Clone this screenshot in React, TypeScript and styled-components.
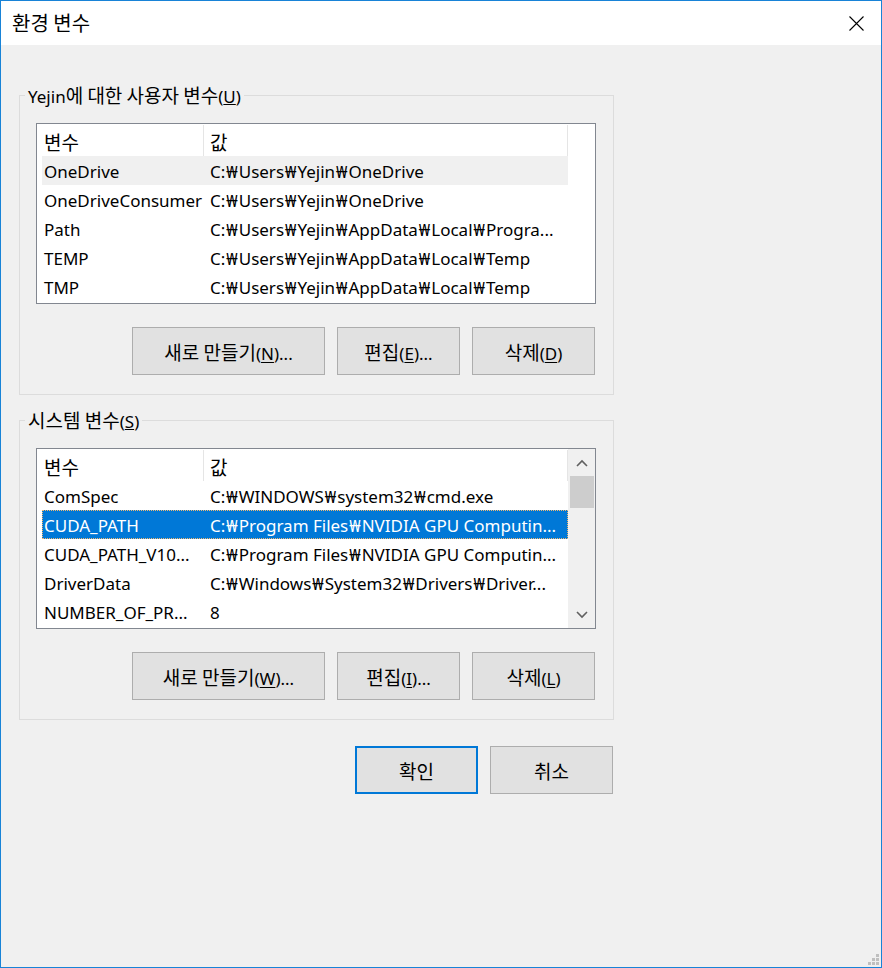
import React from 'react'
import styled, { createGlobalStyle } from 'styled-components'

const colors = {
  frame: '#1883d7',
  face: '#f0f0f0',
  white: '#ffffff',
  text: '#000000',
  groupLine: '#dcdcdc',
  listBorder: '#828790',
  headerLine: '#e5e5e5',
  hover: '#f0f0f0',
  selected: '#0078d7',
  button: '#e1e1e1',
  buttonBorder: '#adadad',
  thumb: '#cdcdcd',
  arrow: '#606060',
  grip: '#bfbfbf',
}

const GlobalStyle = createGlobalStyle`
  html, body {
    margin: 0;
    padding: 0;
    background: ${colors.face};
  }
`

const Window = styled.div`
  position: relative;
  box-sizing: border-box;
  width: 882px;
  height: 968px;
  display: flex;
  flex-direction: column;
  border: 1px solid ${colors.frame};
  background: ${colors.face};
  color: ${colors.text};
  font-family: 'Noto Sans', 'Noto Sans CJK KR', sans-serif;
  font-size: 17px;
`

// Korean runs are drawn a little larger, like Malgun Gothic next to Segoe UI
const Ko = styled.span`
  font-family: 'Noto Sans CJK KR', sans-serif;
  font-size: 19px;
`

const Won = styled.span`
  margin: 0 1px;
`

const TitleBar = styled.header`
  display: flex;
  justify-content: space-between;
  align-items: center;
  flex: none;
  height: 44px;
  padding: 0 17px 0 11px;
  background: ${colors.white};
`

const Title = styled.div`
  font-family: 'Noto Sans CJK KR', sans-serif;
  font-size: 20px;
  line-height: 1;
`

const CloseIcon = styled.svg`
  display: block;
`

const Content = styled.main`
  display: flex;
  flex-direction: column;
  padding: 38px 0 0 18px;
`

const GroupBox = styled.fieldset<{ $gap?: number }>`
  box-sizing: border-box;
  width: 595px;
  min-width: 0;
  margin: 0 0 ${(p) => p.$gap ?? 0}px;
  padding: 16px 17px 19px 16px;
  border: 1px solid ${colors.groupLine};
`

const GroupTitle = styled.legend`
  margin-left: -11px;
  padding: 0 3px;
  line-height: 24px;
  height: 24px;
`

const ListBox = styled.div`
  box-sizing: border-box;
  display: flex;
  width: 560px;
  height: 181px;
  border: 1px solid ${colors.listBorder};
  background: ${colors.white};
  overflow: hidden;
`

const ListBody = styled.div`
  flex: none;
  width: 526px;
  padding-left: 5px;
`

const HeaderRow = styled.div`
  display: flex;
  height: 32px;
`

const HeaderCell = styled.div<{ $width: number; $pad: number }>`
  box-sizing: border-box;
  display: flex;
  align-items: center;
  width: ${(p) => p.$width}px;
  margin-top: 1px;
  padding: 2px 0 0 ${(p) => p.$pad}px;
  border-right: 1px solid ${colors.headerLine};
  white-space: nowrap;
`

const Row = styled.div<{ $state?: 'hover' | 'selected' }>`
  box-sizing: border-box;
  display: flex;
  align-items: center;
  height: 29px;
  padding-top: 2px;
  background: ${(p) =>
    p.$state === 'selected'
      ? colors.selected
      : p.$state === 'hover'
        ? colors.hover
        : 'transparent'};
  color: ${(p) => (p.$state === 'selected' ? colors.white : colors.text)};
  border: 1px dotted
    ${(p) => (p.$state === 'selected' ? '#f2b871' : 'transparent')};
`

const Cell = styled.div<{ $width?: number; $pad: number }>`
  box-sizing: border-box;
  flex: ${(p) => (p.$width ? 'none' : '1')};
  width: ${(p) => (p.$width ? `${p.$width}px` : 'auto')};
  padding-left: ${(p) => p.$pad}px;
  white-space: nowrap;
  overflow: hidden;
`

const ScrollBar = styled.div`
  flex: none;
  display: flex;
  flex-direction: column;
  align-items: center;
  width: 27px;
  margin-left: auto;
  background: ${colors.face};
`

const ScrollArrow = styled.div`
  display: flex;
  justify-content: center;
  align-items: center;
  width: 100%;
  height: 27px;
`

const ScrollThumb = styled.div`
  width: 24px;
  height: 32px;
  background: ${colors.thumb};
`

const ScrollTrack = styled.div`
  flex: 1;
`

const ButtonRow = styled.div<{ $top: number }>`
  display: flex;
  justify-content: flex-end;
  gap: 12px;
  margin-top: ${(p) => p.$top}px;
  padding-right: 1px;
`

const Button = styled.button<{ $width: number; $default?: boolean }>`
  box-sizing: border-box;
  width: ${(p) => p.$width}px;
  height: 48px;
  padding: 0;
  border: ${(p) =>
    p.$default
      ? `2px solid ${colors.selected}`
      : `1px solid ${colors.buttonBorder}`};
  background: ${colors.button};
  color: ${colors.text};
  font-family: inherit;
  font-size: 17px;

  u {
    text-underline-offset: 2px;
  }
`

const Footer = styled.div`
  display: flex;
  justify-content: flex-end;
  gap: 12px;
  width: 594px;
  margin-top: 26px;
`

const Grip = styled.svg`
  position: absolute;
  right: 1px;
  bottom: 1px;
`

type Variable = {
  name: string
  value: string
  state?: 'hover' | 'selected'
}

const userVariables: Variable[] = [
  { name: 'OneDrive', value: 'C:₩Users₩Yejin₩OneDrive', state: 'hover' },
  { name: 'OneDriveConsumer', value: 'C:₩Users₩Yejin₩OneDrive' },
  { name: 'Path', value: 'C:₩Users₩Yejin₩AppData₩Local₩Progra...' },
  { name: 'TEMP', value: 'C:₩Users₩Yejin₩AppData₩Local₩Temp' },
  { name: 'TMP', value: 'C:₩Users₩Yejin₩AppData₩Local₩Temp' },
]

const systemVariables: Variable[] = [
  { name: 'ComSpec', value: 'C:₩WINDOWS₩system32₩cmd.exe' },
  {
    name: 'CUDA_PATH',
    value: 'C:₩Program Files₩NVIDIA GPU Computin...',
    state: 'selected',
  },
  { name: 'CUDA_PATH_V10...', value: 'C:₩Program Files₩NVIDIA GPU Computin...' },
  { name: 'DriverData', value: 'C:₩Windows₩System32₩Drivers₩Driver...' },
  { name: 'NUMBER_OF_PR...', value: '8' },
]

// the Korean system font draws the backslash as a wide won sign
const PathText = ({ text }: { text: string }) => (
  <>
    {text.split('₩').map((part, i) => (
      <React.Fragment key={i}>
        {i > 0 && <Won>₩</Won>}
        {part}
      </React.Fragment>
    ))}
  </>
)

const Chevron = ({ up }: { up?: boolean }) => (
  <svg width="12" height="8" viewBox="0 0 12 8">
    <polyline
      points={up ? '1,7 6,2 11,7' : '1,1 6,6 11,1'}
      fill="none"
      stroke={colors.arrow}
      strokeWidth="1.6"
    />
  </svg>
)

const VariableList = ({
  items,
  scrollable,
}: {
  items: Variable[]
  scrollable?: boolean
}) => (
  <ListBox>
    <ListBody>
      <HeaderRow>
        <HeaderCell $width={162} $pad={2}>
          <Ko>변수</Ko>
        </HeaderCell>
        <HeaderCell $width={364} $pad={6}>
          <Ko>값</Ko>
        </HeaderCell>
      </HeaderRow>
      {items.map((item) => (
        <Row key={item.name} $state={item.state}>
          <Cell $width={161} $pad={1}>
            {item.name}
          </Cell>
          <Cell $pad={6}>
            <PathText text={item.value} />
          </Cell>
        </Row>
      ))}
    </ListBody>
    {scrollable && (
      <ScrollBar>
        <ScrollArrow>
          <Chevron up />
        </ScrollArrow>
        <ScrollThumb />
        <ScrollTrack />
        <ScrollArrow>
          <Chevron />
        </ScrollArrow>
      </ScrollBar>
    )}
  </ListBox>
)

const App: React.FC = () => (
  <>
    <GlobalStyle />
    <Window>
      <TitleBar>
        <Title>환경 변수</Title>
        <CloseIcon width="15" height="15" viewBox="0 0 15 15">
          <path
            d="M0.5 0.5 L14.5 14.5 M14.5 0.5 L0.5 14.5"
            stroke="#000"
            strokeWidth="1.1"
          />
        </CloseIcon>
      </TitleBar>
      <Content>
        <GroupBox $gap={13}>
          <GroupTitle>
            Yejin<Ko>에 대한 사용자 변수</Ko>(<u>U</u>)
          </GroupTitle>
          <VariableList items={userVariables} />
          <ButtonRow $top={23}>
            <Button $width={193}>
              <Ko>새로 만들기</Ko>(<u>N</u>)...
            </Button>
            <Button $width={123}>
              <Ko>편집</Ko>(<u>E</u>)...
            </Button>
            <Button $width={123}>
              <Ko>삭제</Ko>(<u>D</u>)
            </Button>
          </ButtonRow>
        </GroupBox>
        <GroupBox>
          <GroupTitle>
            <Ko>시스템 변수</Ko>(<u>S</u>)
          </GroupTitle>
          <VariableList items={systemVariables} scrollable />
          <ButtonRow $top={23}>
            <Button $width={193}>
              <Ko>새로 만들기</Ko>(<u>W</u>)...
            </Button>
            <Button $width={123}>
              <Ko>편집</Ko>(<u>I</u>)...
            </Button>
            <Button $width={123}>
              <Ko>삭제</Ko>(<u>L</u>)
            </Button>
          </ButtonRow>
        </GroupBox>
        <Footer>
          <Button $width={123} $default>
            <Ko>확인</Ko>
          </Button>
          <Button $width={123}>
            <Ko>취소</Ko>
          </Button>
        </Footer>
      </Content>
      <Grip width="12" height="12" viewBox="0 0 12 12">
        <g fill={colors.grip}>
          <rect x="8" y="0" width="3" height="3" />
          <rect x="4" y="4" width="3" height="3" />
          <rect x="8" y="4" width="3" height="3" />
          <rect x="0" y="8" width="3" height="3" />
          <rect x="4" y="8" width="3" height="3" />
          <rect x="8" y="8" width="3" height="3" />
        </g>
      </Grip>
    </Window>
  </>
)

export default App
